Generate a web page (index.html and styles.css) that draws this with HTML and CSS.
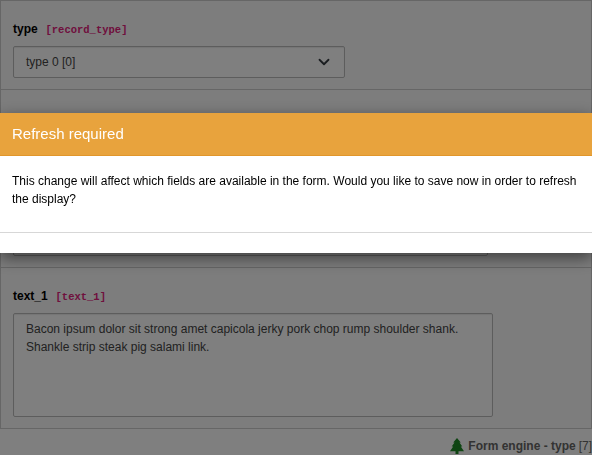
FILE: index.html
```
<!DOCTYPE html>
<html lang="en">
<head>
<meta charset="utf-8">
<title>Form engine - type</title>
<link rel="stylesheet" href="styles.css">
</head>
<body>
<main class="form">
  <section class="field field-type">
    <div class="label">type <code>[record_type]</code></div>
    <div class="control select">
      <span>type 0 [0]</span>
      <svg class="chevron" viewBox="0 0 16 16" width="12" height="12"><path d="M2 5l6 6 6-6" fill="none" stroke="#343a40" stroke-width="2.4" stroke-linecap="round" stroke-linejoin="round"/></svg>
    </div>
  </section>
  <section class="field field-input">
    <div class="control input"></div>
  </section>
  <section class="field field-text">
    <div class="label">text_1 <code>[text_1]</code></div>
    <div class="control textarea">Bacon ipsum dolor sit strong amet capicola jerky pork chop rump shoulder shank.<br>Shankle strip steak pig salami link.</div>
  </section>
</main>
<footer class="record">
  <svg viewBox="0 0 16 16" width="16" height="16"><path fill="#1f8a26" d="M8 0l3.800 4.500h-1.300L13.300 8.500h-1.500L15 13.300H9.500V16h-3v-2.700H1l3.200-4.800H2.700L5.500 4.500H4.200z"/></svg>
  <strong>Form engine - type</strong><span>[7]</span>
</footer>
<div class="backdrop"></div>
<div class="modal" role="dialog">
  <div class="modal-header">Refresh required</div>
  <div class="modal-body">This change will affect which fields are available in the form. Would you like to save now in order to refresh the display?</div>
  <div class="modal-footer"></div>
</div>
</body>
</html>
```
FILE: styles.css
```
* { box-sizing: border-box; }
html, body { height: 100%; }
body {
  margin: 0;
  overflow: hidden;
  background: #fff;
  color: #000;
  font: 12px/18px "Liberation Sans", Arial, sans-serif;
}
.form {
  border: 1px solid #ccc;
  border-bottom: 0;
  background: #fafafa;
}
.field {
  border-bottom: 1px solid #ccc;
  padding: 0 12px;
}
.field-type { height: 89px; padding-top: 19px; }
.field-input {
  height: 178px;
  display: flex;
  flex-direction: column;
  justify-content: flex-end;
  padding-bottom: 11px;
}
.field-text { height: 161px; padding-top: 19px; }
.label {
  height: 26px;
  font-weight: bold;
}
code {
  margin-left: 4.5px;
  color: #e0217a;
  font: bold 10.5px "Liberation Mono", monospace;
}
.control {
  border: 1px solid #bbb;
  border-radius: 2px;
  background: #fefefe;
  color: #444;
  padding: 6px 12px;
  box-shadow: inset 0 1px 1px rgba(0, 0, 0, .075);
}
.select {
  display: flex;
  align-items: center;
  justify-content: space-between;
  width: 332px;
  height: 32px;
}
.chevron { margin-right: 2px; }
.input { width: 475px; height: 32px; }
.textarea { width: 480px; height: 104px; }
.record {
  display: flex;
  justify-content: flex-end;
  align-items: center;
  height: 18px;
  margin-top: 8px;
  color: #666;
}
.record svg { margin-right: 3px; }
.record strong { margin-right: 3px; }
.backdrop {
  position: fixed;
  inset: 0;
  background: rgba(0, 0, 0, .5);
}
.modal {
  position: fixed;
  top: 113px;
  left: 0;
  right: 0;
  background: #fff;
  box-shadow: 0 5px 15px rgba(0, 0, 0, .5);
}
.modal-header {
  height: 43px;
  padding: 12px;
  border-bottom: 1px solid #e1962b;
  background: #e8a33d;
  color: #fff;
  font-size: 15px;
}
.modal-body {
  height: 76px;
  padding: 16px 12px;
}
.modal-footer {
  height: 21px;
  border-top: 1px solid #d7d7d7;
}
```
